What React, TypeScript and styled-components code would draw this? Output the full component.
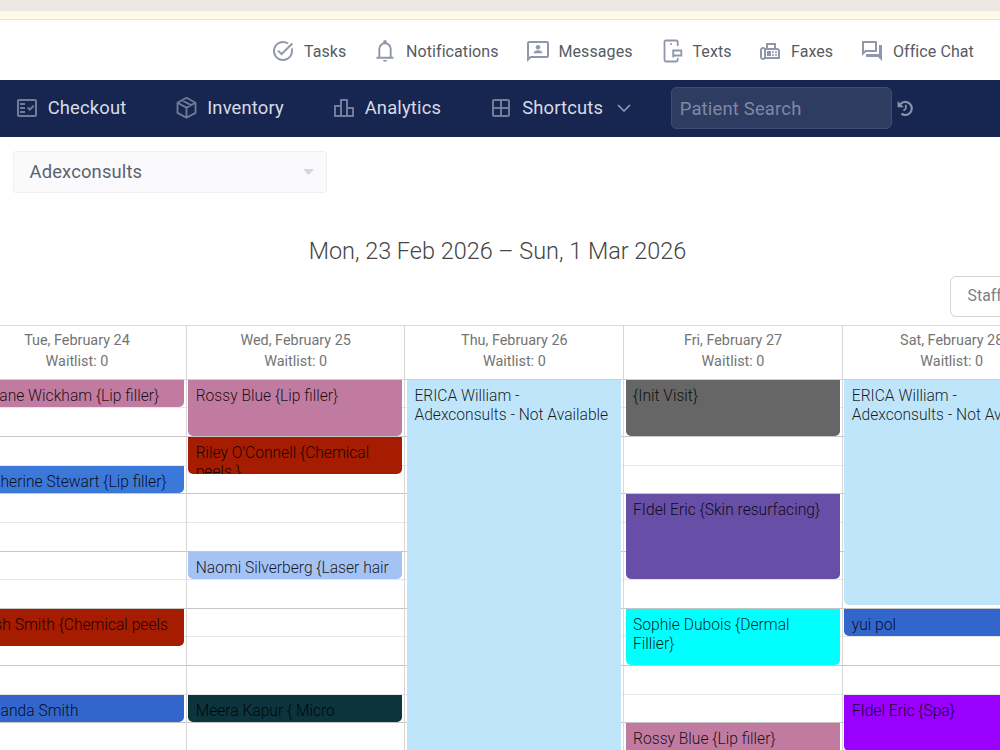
import React from "react";
import styled, { createGlobalStyle } from "styled-components";
import {
  MdOutlineTaskAlt, MdOutlineFax, MdOutlineForum,
  MdOutlineFactCheck, MdOutlineLeaderboard, MdOutlineWindow,
} from "react-icons/md";

const Global = createGlobalStyle`
  * { box-sizing: border-box; }
  body { margin: 0; background: #fff; font-family: Roboto, "Liberation Sans", sans-serif; }
`;
const Page = styled.div`
  width: 1000px; height: 750px; overflow: hidden;
  display: flex; flex-direction: column; background: #fff;
`;
const BrowserStrip = styled.div`height: 11px; background: #ede8e1; flex: none;`;
const Notice = styled.div`height: 9px; background: #fef8e7; border-bottom: 1px solid #e9e3d8; flex: none;`;
const TopBar = styled.nav`
  height: 60px; flex: none; display: flex; align-items: center;
  padding: 2px 0 0 271px; color: #9096ab;
`;
const TopItem = styled.a<{ $width: number }>`
  width: ${p => p.$width}px; flex: none; display: flex; align-items: center; gap: 9px;
  svg { width: 24px; height: 24px; flex: none; }
`;
const TopLabel = styled.span`
  padding-top: 1px; font-size: 16px; line-height: 20px; color: #565b63; white-space: nowrap; letter-spacing: 0.08px;
`;
const MainBar = styled.nav`
  height: 57px; flex: none; display: flex; align-items: center;
  padding: 0 0 1px 14.7px; background: #172650; color: #727b99;
`;
const MainItem = styled.a<{ $width: number }>`
  width: ${p => p.$width}px; flex: none; display: flex; align-items: center; gap: 9px;
  > svg:first-child { width: 24px; height: 24px; flex: none; }
`;
const MainLabel = styled.span`
  font-size: 18.4px; line-height: 24px; color: #d8dbe4; white-space: nowrap; letter-spacing: 0.16px;
`;
const Chevron = styled.svg`width: 14px; height: 8px; margin-left: 4.5px;`;
const Search = styled.div`
  width: 221.5px; height: 42px; display: flex; align-items: center; padding-left: 8px;
  background: #2e3c62; border: 1px solid #414d73; border-radius: 6px;
  color: #8088a2; font-size: 18.4px; letter-spacing: 0.2px; margin-right: 5px;
`;
const Practice = styled.div`
  width: 314px; height: 42px; margin: 14px 0 0 13px; padding: 0 12px 1px 15.5px; flex: none;
  display: flex; align-items: center; justify-content: space-between;
  background: #fafafc; border: 1px solid #f0f0f3; border-radius: 3px;
  color: #596270; font-size: 18.4px; letter-spacing: 0.15px;
`;
const Caret = styled.svg`width: 11px; height: 6px;`;
const Range = styled.h1`
  margin: 41px 5px 0 0; height: 34px; line-height: 34px; flex: none; text-align: center;
  font-size: 23.45px; font-weight: 300; color: #454545;
`;
const Filters = styled.div`height: 57px; flex: none; display: flex; padding: 8px 0 0 949.6px;`;
const StaffButton = styled.button`
  width: 110px; height: 41px; flex: none; padding: 0 0 2px 17px; text-align: left;
  border: 1px solid #d4d4d4; border-radius: 6px; background: #fff;
  font: 400 15.8px Roboto, sans-serif; color: #7b7f86;
`;
const Calendar = styled.div`
  display: flex; flex: none; margin-left: -31.9px; width: 1200px; border-top: 1px solid #dadada;
`;
const Day = styled.section`
  width: 218.7px; flex: none; border-right: 1px solid #d6d6d6;
`;
const DayHead = styled.header`
  height: 53.67px; padding-top: 3.5px; border-bottom: 1px solid #d0d0d0;
  text-align: center; font-size: 14.4px; line-height: 21px; color: #747474;
`;
const DayBody = styled.div`
  display: grid; grid-template-columns: 100%; grid-template-rows: repeat(39, 9.5556px);
`;
const Slot = styled.div<{ $row: number; $hour: boolean }>`
  grid-column: 1; grid-row: ${p => p.$row} / span 3;
  border-bottom: 1px solid ${p => (p.$hour ? "#c6c6c6" : "#e6e6e6")};
`;
const Event = styled.article<{ $row: number; $span: number; $color: string; $trim?: number }>`
  grid-column: 1; grid-row: ${p => p.$row} / span ${p => p.$span};
  margin: 0 2px ${p => p.$trim ?? 1}px 1.6px; padding: 7px 4px 0 7.3px; overflow: hidden;
  min-height: 0; background: ${p => p.$color}; border-radius: 0 0 5px 5px;
  font-size: 15.62px; line-height: 19px; font-weight: 300; color: rgba(0, 0, 0, 0.88);
  white-space: pre;
`;

const BellIcon = () => (
  <svg viewBox="0 0 24 24" fill="none" stroke="currentColor" strokeWidth="1.900">
    <path d="M3.500 18.800h17M6.300 18.500V10a5.700 5.700 0 0 1 11.400 0v8.500" />
    <path d="M10.200 4.200V2.800a1.800 1.800 0 0 1 3.600 0v1.400zM9.700 21h4.600q-.8 1.800-2.300 1.800T9.700 21z" fill="currentColor" stroke="none" />
  </svg>
);
const MessageIcon = () => (
  <svg viewBox="0 0 24 24" fill="currentColor">
    <path fillRule="evenodd" d="M21 2H3Q1 2 1 4v19l4-4h16q2 0 2-2V4q0-2-2-2zM21 17H4.200L3 18.200V4h18z" />
    <circle cx="12" cy="8.300" r="2.200" />
    <path d="M7.500 14.300c0-2 2.600-3 4.500-3s4.500 1 4.500 3z" />
  </svg>
);
const TextsIcon = () => (
  <svg viewBox="0 0 24 24" fill="none" stroke="currentColor" strokeWidth="1.800">
    <path d="M17.700 7V3Q17.700 1.500 16.200 1.500H6Q4.500 1.500 4.500 3v18q0 1.500 1.500 1.500h10.200Q17.700 22.500 17.700 21v-2" />
    <path d="M13.200 18.500V11.500H21.300v5h-8" />
    <circle cx="11" cy="5" r="1" fill="currentColor" stroke="none" />
  </svg>
);
const PackageIcon = () => (
  <svg viewBox="0 0 24 24" fill="none" stroke="currentColor" strokeWidth="1.800" strokeLinejoin="round">
    <path d="M12.500 1.800l9 4.900v10.200L12.500 21.800l-9-4.900V6.700zM3.500 6.700l9 4.900 9-4.900M12.500 11.600v10.200M8 4.200l9 4.900" />
  </svg>
);
const HistoryIcon = () => (
  <svg width="17" height="17" viewBox="0 0 17 17" fill="none" stroke="#8c92aa" strokeWidth="2.200">
    <path d="M3.200 4.400A6.500 6.500 0 1 1 4.400 13.700" />
    <path d="M.6 1v6.300h6.300z" fill="#8c92aa" stroke="none" />
    <path d="M8.800 4.700v4L6.500 10.600" strokeWidth="1.700" />
  </svg>
);

const topItems: [React.ReactNode, string, number][] = [
  [<MdOutlineTaskAlt />, "Tasks", 102],
  [<BellIcon />, "Notifications", 152.5],
  [<MessageIcon />, "Messages", 134],
  [<TextsIcon />, "Texts", 98.5],
  [<MdOutlineFax />, "Faxes", 102],
  [<MdOutlineForum />, "Office Chat", 130],
];

type Appt = { row: number; span: number; color: string; text: string; trim?: number };
const days: { name: string; appts: Appt[] }[] = [
  { name: "Tue, February 24", appts: [
    { row: 1, span: 3, color: "#c27ba0", text: "Bryane Wickham {Lip filler}" },
    { row: 10, span: 3, color: "#3c78d8", text: "Catherine Stewart {Lip filler}" },
    { row: 25, span: 4, color: "#a61c00", text: "Josh Smith {Chemical peels" },
    { row: 34, span: 3, color: "#3366cc", text: "Amanda Smith" },
  ] },
  { name: "Wed, February 25", appts: [
    { row: 1, span: 6, color: "#c27ba0", text: "Rossy Blue {Lip filler}" },
    { row: 7, span: 4, color: "#a61c00", text: "Riley O'Connell {Chemical\npeels }" },
    { row: 19, span: 3, color: "#a4c2f4", text: "Naomi Silverberg {Laser hair" },
    { row: 34, span: 3, color: "#0c343d", text: "Meera Kapur { Micro" },
  ] },
  { name: "Thu, February 26", appts: [
    { row: 1, span: 39, color: "#bfe5fa", text: "ERICA William -\nAdexconsults - Not Available", trim: -6 },
  ] },
  { name: "Fri, February 27", appts: [
    { row: 1, span: 6, color: "#666666", text: "{Init Visit}" },
    { row: 13, span: 9, color: "#674ea7", text: "FIdel Eric {Skin resurfacing}" },
    { row: 25, span: 6, color: "#00ffff", text: "Sophie Dubois {Dermal\nFillier}" },
    { row: 37, span: 3, color: "#c27ba0", text: "Rossy Blue {Lip filler}", trim: -6 },
  ] },
  { name: "Sat, February 28", appts: [
    { row: 1, span: 24, color: "#bfe5fa", text: "ERICA William -\nAdexconsults - Not Available", trim: 4 },
    { row: 25, span: 3, color: "#3366cc", text: "yui pol" },
    { row: 34, span: 6, color: "#9900ff", text: "FIdel Eric {Spa}" },
  ] },
];

export default function App() {
  return (
    <Page>
      <Global />
      <BrowserStrip />
      <Notice />
      <TopBar>
        {topItems.map(([icon, label, width]) => (
          <TopItem key={label} $width={width}>{icon}<TopLabel>{label}</TopLabel></TopItem>
        ))}
      </TopBar>
      <MainBar>
        <MainItem $width={159.5}><MdOutlineFactCheck /><MainLabel>Checkout</MainLabel></MainItem>
        <MainItem $width={157.5}><PackageIcon /><MainLabel>Inventory</MainLabel></MainItem>
        <MainItem $width={157.5}><MdOutlineLeaderboard /><MainLabel>Analytics</MainLabel></MainItem>
        <MainItem $width={181.5}>
          <MdOutlineWindow /><MainLabel>Shortcuts</MainLabel>
          <Chevron viewBox="0 0 14 8" fill="none" stroke="#9299b2" strokeWidth="1.600"><path d="M1 1l6 6 6-6" /></Chevron>
        </MainItem>
        <Search>Patient Search</Search>
        <HistoryIcon />
      </MainBar>
      <Practice>
        Adexconsults
        <Caret viewBox="0 0 11 6"><path d="M0 0h11L5.500 6z" fill="#d5d7da" /></Caret>
      </Practice>
      <Range>Mon, 23 Feb 2026 – Sun, 1 Mar 2026</Range>
      <Filters><StaffButton>Staff</StaffButton></Filters>
      <Calendar>
        {days.map(day => (
          <Day key={day.name}>
            <DayHead>{day.name}<br />Waitlist: 0</DayHead>
            <DayBody>
              {Array.from({ length: 13 }, (_, i) => <Slot key={i} $row={i * 3 + 1} $hour={i % 2 === 1} />)}
              {day.appts.map(a => (
                <Event key={a.row} $row={a.row} $span={a.span} $color={a.color} $trim={a.trim}>{a.text}</Event>
              ))}
            </DayBody>
          </Day>
        ))}
      </Calendar>
    </Page>
  );
}
